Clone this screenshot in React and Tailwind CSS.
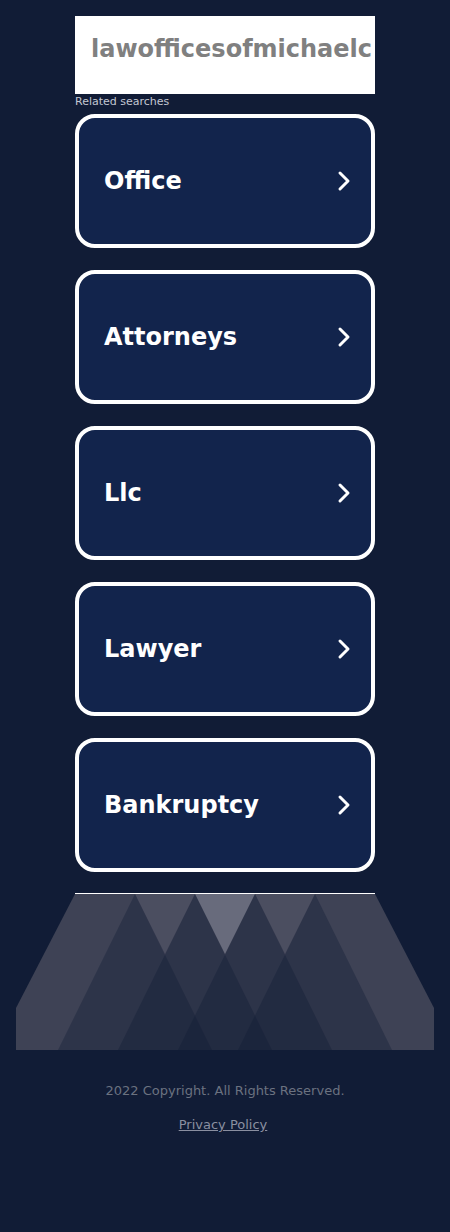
const searches = ['Office', 'Attorneys', 'Llc', 'Lawyer', 'Bankruptcy'];

const Chevron = () => (
  <svg viewBox="0 0 14 22" className="w-[14px] h-[22px]" fill="none" stroke="white" strokeWidth="3" strokeLinecap="round" strokeLinejoin="round">
    <polyline points="3,3 11,11 3,19" />
  </svg>
);

const Mountains = () => (
  <svg viewBox="0 0 418 156" className="block w-[418px] h-[156px]">
    {/* base shape */}
    <polygon points="59,0 359,0 418,114 418,156 0,156 0,114" fill="#3e4255" />
    {/* lighter gaps between peaks */}
    <polygon points="119,0 179,0 149,60" fill="#4b4e60" />
    <polygon points="179,0 239,0 209,60" fill="#686b7c" />
    <polygon points="239,0 299,0 269,60" fill="#4b4e60" />
    {/* overlapping dark peaks */}
    {[119, 179, 239, 299].map((x) => (
      <polygon
        key={x}
        points={`${x},0 ${x + 77},156 ${x - 77},156`}
        fill="#111b36"
        fillOpacity="0.36"
      />
    ))}
  </svg>
);

const App = () => {
  return (
    <div className="min-h-[1232px] bg-[#111c36] font-['DejaVu_Sans',sans-serif]">
      <div className="w-[300px] mx-auto pt-4">
        {/* Domain header */}
        <div className="bg-white h-[78px] pl-4 pt-[17px] overflow-hidden">
          <p className="text-[24px] leading-8 font-bold text-[#808080] whitespace-nowrap">
            lawofficesofmichaelc
          </p>
        </div>
        <p className="text-[11px] leading-[14px] text-[#c3c7d1] mt-[1px] mb-[5px]">Related searches</p>

        {/* Related searches */}
        <div className="flex flex-col gap-[22px]">
          {searches.map((s) => (
            <a
              key={s}
              href="#"
              className="flex items-center justify-between h-[134px] rounded-[20px] border-4 border-white bg-[#12244c] pl-[25px] pr-[20px]"
            >
              <span className="text-[24px] font-bold text-white">{s}</span>
              <Chevron />
            </a>
          ))}
        </div>

        <div className="mt-[21px] h-px bg-white" />
      </div>

      <div className="flex justify-center">
        <Mountains />
      </div>

      <div className="text-center pt-[33px]">
        <p className="text-[13px] leading-4 text-[#6b7280]">2022 Copyright. All Rights Reserved.</p>
        <a href="#" className="inline-block mt-[18px] mr-1 text-[13px] leading-4 text-[#8a8fa0] underline">
          Privacy Policy
        </a>
      </div>
    </div>
  );
};

export default App;
